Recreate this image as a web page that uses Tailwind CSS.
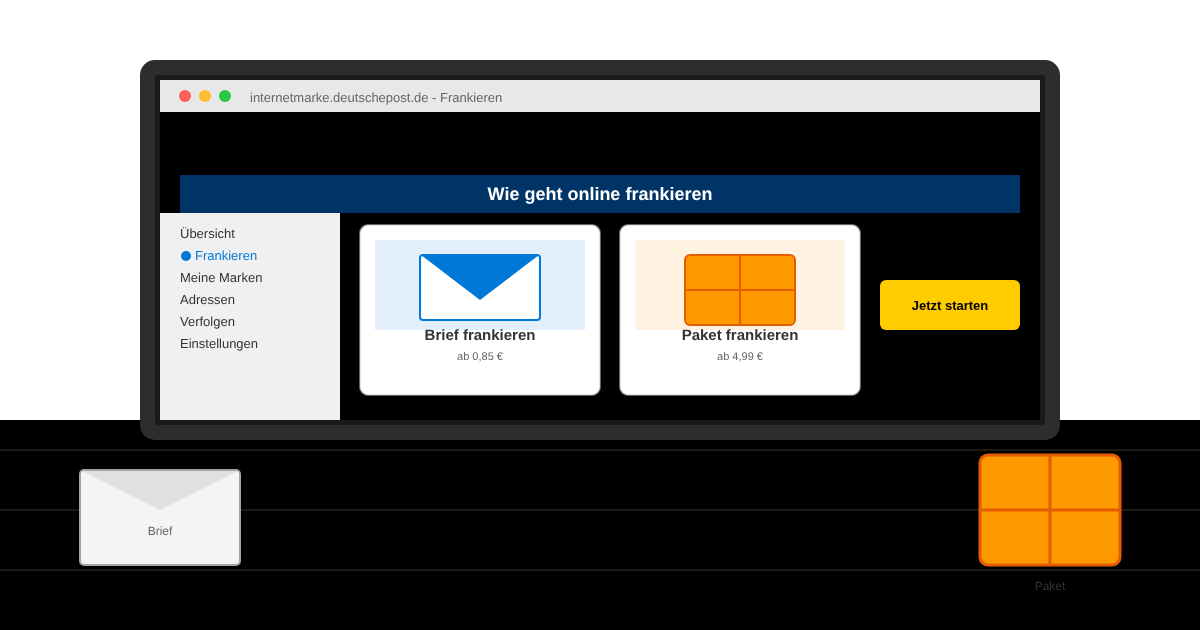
<!DOCTYPE html>
<html lang="en">

<head>
    <meta charset="UTF-8">
    <meta name="viewport" content="width=device-width, initial-scale=1.0">
    <title>Online frankieren</title>
    <script src="https://cdn.jsdelivr.net/npm/@tailwindcss/browser@4"></script>
</head>

<body class="relative w-[1200px] h-[630px] overflow-hidden bg-white font-['Liberation_Sans',Arial,sans-serif] [text-rendering:geometricPrecision]">
    <!-- desk -->
    <div class="relative mt-[420px] h-[210px] bg-black pt-[29px] flex flex-col gap-[58px]">
        <div class="h-[2px] bg-[#1c1a12]"></div>
        <div class="h-[2px] bg-[#1c1a12]"></div>
        <div class="h-[2px] bg-[#1c1a12]"></div>

        <svg class="absolute left-[79px] top-[49px]" width="162" height="97" viewBox="0 0 162 97">
            <rect x="1" y="1" width="160" height="95" rx="4" fill="#f4f4f4" stroke="#a3a3a3" stroke-width="2" />
            <path d="M3 2 H159 L81 41 Z" fill="#e0e0e0" />
        </svg>
        <span class="absolute left-[80px] top-[104px] w-[160px] text-center text-xs leading-[14px] text-[#666] [will-change:transform]">Brief</span>

        <svg class="absolute left-[978px] top-[33px]" width="144" height="114" viewBox="0 0 144 114">
            <rect x="2" y="2" width="140" height="110" rx="8" fill="#ff9900" stroke="#e65c00" stroke-width="3" />
            <path d="M72 2 V112 M2 57 H142" stroke="#e65c00" stroke-width="3" fill="none" />
        </svg>
        <span class="absolute left-[980px] top-[159px] w-[140px] text-center text-xs leading-[14px] text-[#333] [will-change:transform]">Paket</span>
    </div>

    <!-- laptop -->
    <div class="absolute left-[140px] top-[60px] w-[920px] h-[380px] p-[15px] rounded-[15px] bg-[#2d2d2d] [will-change:transform]">
        <div class="h-full border-[5px] border-[#1a1a1a] rounded-[3px] bg-black flex flex-col">
            <div class="h-8 shrink-0 bg-[#e8e8e8] flex items-center pl-[19px]">
                <span class="w-3 h-3 rounded-full bg-[#ff5f57]"></span>
                <span class="w-3 h-3 rounded-full bg-[#ffbd2e] ml-2"></span>
                <span class="w-3 h-3 rounded-full bg-[#28c940] ml-2"></span>
                <span class="ml-[19px] pt-[3px] text-[13px] text-[#666]">internetmarke.deutschepost.de - Frankieren</span>
            </div>

            <div class="mt-[63px] mx-5 h-[38px] shrink-0 bg-[#003366] flex items-center justify-center text-lg font-bold text-white">
                Wie geht online frankieren
            </div>

            <div class="flex flex-1">
                <nav class="w-[180px] bg-[#f0f0f0] pt-[10px] pl-5 text-[13px] leading-[22px] text-[#333]">
                    <div>Übersicht</div>
                    <div class="flex items-center text-[#0078d7]">
                        <span class="w-[10px] h-[10px] rounded-full bg-[#0078d7] ml-px mr-1"></span>Frankieren
                    </div>
                    <div>Meine Marken</div>
                    <div>Adressen</div>
                    <div>Verfolgen</div>
                    <div>Einstellungen</div>
                </nav>

                <main class="flex-1 flex items-start pl-5 pt-3 gap-5">
                    <div class="w-[240px] h-[170px] rounded-lg border border-[#e5e5e5] shadow-[0_0_0_1px_#666] bg-white p-[14px] text-center">
                        <div class="h-[90px] bg-[#e3f0fb] flex justify-center pt-[14px]">
                            <svg width="122" height="67" viewBox="0 0 122 67">
                                <rect x="1" y="1" width="120" height="65" rx="3" fill="#fff" stroke="#0078d7" stroke-width="2" />
                                <path d="M2 1 H120 L61 46 Z" fill="#0078d7" />
                            </svg>
                        </div>
                        <div class="text-[15px] leading-4 font-bold text-[#333] -mt-0.5">Brief frankieren</div>
                        <div class="mt-1.5 text-[11px] leading-[14px] text-[#666]">ab 0,85 €</div>
                    </div>

                    <div class="w-[240px] h-[170px] rounded-lg border border-[#e5e5e5] shadow-[0_0_0_1px_#666] bg-white p-[14px] text-center">
                        <div class="h-[90px] bg-[#fff2e0] flex justify-center pt-[14px]">
                            <svg width="112" height="72" viewBox="0 0 112 72">
                                <rect x="1" y="1" width="110" height="70" rx="5" fill="#ff9900" stroke="#e65c00" stroke-width="2" />
                                <path d="M56 1 V71 M1 36 H111" stroke="#e65c00" stroke-width="2" fill="none" />
                            </svg>
                        </div>
                        <div class="text-[15px] leading-4 font-bold text-[#333] -mt-0.5">Paket frankieren</div>
                        <div class="mt-1.5 text-[11px] leading-[14px] text-[#666]">ab 4,99 €</div>
                    </div>

                    <button class="mt-[55px] w-[140px] h-[50px] pt-0.5 rounded-md bg-[#ffcc00] text-[13px] font-bold text-black">Jetzt starten</button>
                </main>
            </div>
        </div>
    </div>
</body>

</html>
